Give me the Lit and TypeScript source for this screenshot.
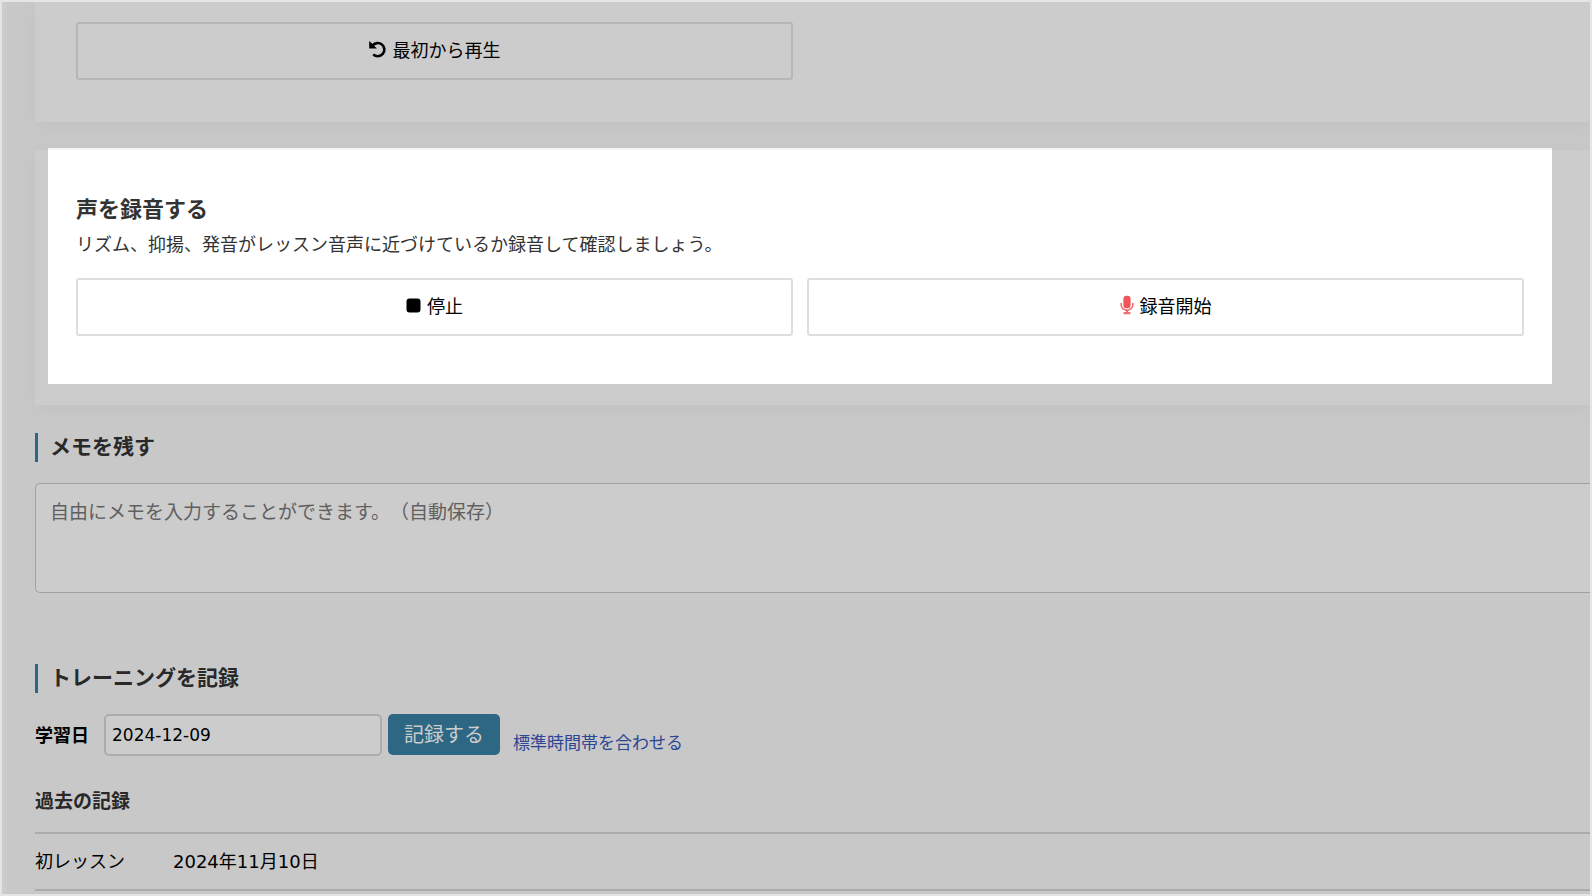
import { LitElement, html, css, svg } from "lit";
import { customElement, state } from "lit/decorators.js";

const undoIcon = svg`<svg class="icon undo" viewBox="0 0 18 18" aria-hidden="true">
  <path d="M3.4 5.8A6.6 6.6 0 1 1 4.2 14.4" fill="none" stroke="currentColor" stroke-width="2.6"/>
  <path d="M.2 1v7.6H8L5.6 6.2 4.2 4.4z" fill="currentColor"/></svg>`;
const stopIcon = svg`<svg class="icon stop" viewBox="0 0 15 15" aria-hidden="true">
  <rect x=".5" y=".5" width="14" height="14" rx="3" fill="currentColor"/></svg>`;
const micIcon = svg`<svg class="icon mic" viewBox="0 0 14 20" aria-hidden="true">
  <rect x="3.4" y=".8" width="7.2" height="12.4" rx="3.2" fill="currentColor"/>
  <path d="M1.2 8v2a5.8 5.2 0 0 0 11.6 0V8" fill="none" stroke="currentColor" stroke-width="1.6" opacity=".85"/>
  <path d="M7 15v3M3.6 18.2h6.8" fill="none" stroke="currentColor" stroke-width="2.2" opacity=".85"/></svg>`;

@customElement("app-root")
export class AppRoot extends LitElement {
  @state() private records = [{ label: "初レッスン", y: "2024", m: "11", d: "10" }];

  static styles = css`
    :host {
      display: block;
      font-family: "Noto Sans CJK JP", sans-serif;
      font-size: 18px;
      color: #000;
      text-spacing-trim: space-all;
    }
    * { box-sizing: border-box; margin: 0; }
    button, input, textarea { font-family: inherit; font-size: inherit; color: inherit; text-spacing-trim: inherit; }
    .page {
      min-height: 100vh;
      border: 2px solid #e5e5e5;
      background: #c8c8c8;
      display: flex;
      overflow: hidden;
    }
    .edge { width: 5px; background: #ccc; flex: none; }
    .content { flex: 1; min-width: 0; padding-left: 28px; }
    .card { background: #ccc; box-shadow: 0 4px 20px rgba(0, 0, 0, 0.03); }
    .player { padding: 20px 66px 42px 41px; margin-bottom: 28px; }
    .recorder { display: flex; padding: 0 38px 21px 13px; margin-bottom: 28px; }
    .spotlight {
      flex: 1;
      margin-top: -2px;
      border-top: 2px solid #f5f5f5;
      background: #fff;
      padding: 39px 28px 48px 28px;
    }
    .pair { display: grid; grid-template-columns: 1fr 1fr; gap: 14px; }
    .wide {
      height: 58px;
      border: 2px solid #b6b6b6;
      border-radius: 3px;
      background: transparent;
      display: flex;
      align-items: center;
      justify-content: center;
      gap: 6px;
      padding: 0 0 4px;
    }
    .spotlight .wide { border-color: #dedede; }
    .icon { flex: none; display: block; }
    .undo { width: 18px; height: 18px; }
    .stop { width: 15px; height: 15px; }
    .mic { width: 14px; height: 20px; color: #f05558; }
    .title { font-size: 22px; line-height: 36px; color: #333; }
    .lead { line-height: 36px; color: #333; margin-bottom: 17px; }
    .section {
      font-size: 21px;
      line-height: 25px;
      height: 29px;
      border-left: 3px solid #2d6784;
      padding-left: 12px;
      margin-bottom: 21px;
      color: #292929;
    }
    .memo {
      display: block;
      width: 100%;
      height: 110px;
      resize: none;
      border: 1px solid #a0a0a0;
      border-right: 0;
      border-radius: 5px 0 0 5px;
      background: #ccc;
      padding: 11px 14px;
      font-size: 19px;
      line-height: 32px;
      margin-bottom: 71px;
    }
    .memo::placeholder { color: #606060; opacity: 1; }
    .form { display: flex; align-items: flex-start; }
    .label { font-weight: bold; line-height: 40px; margin-right: 15px; }
    .date {
      width: 278px;
      height: 42px;
      border: 2px solid #acacac;
      border-radius: 5px;
      background: #ccc;
      padding: 0 6px;
      font-family: "DejaVu Sans", sans-serif;
      font-size: 17px;
      margin-right: 6px;
    }
    .save {
      height: 41px;
      border: 0;
      border-radius: 5px;
      background: #2d6784;
      color: #ccc;
      font-size: 20px;
      padding: 0 16px 3px;
      margin-right: 13px;
    }
    .zone { font-size: 17px; line-height: 24px; margin-top: 16px; color: #2d4694; text-decoration: none; }
    .past { font-size: 19px; line-height: 30px; margin: 29px 0 17px; color: #292929; }
    .log { width: 100%; border-collapse: collapse; }
    .log th, .log td {
      height: 57px;
      padding: 0 0 4px;
      border-top: 2px solid #ababab;
      border-bottom: 2px solid #ababab;
      text-align: left;
      font-weight: normal;
    }
    .log th { width: 138px; }
    .num { font-family: "DejaVu Sans", sans-serif; }
  `;

  render() {
    return html`
      <main class="page">
        <div class="edge"></div>
        <div class="content">
          <section class="card player">
            <div class="pair"><button class="wide" type="button">${undoIcon}最初から再生</button></div>
          </section>
          <section class="card recorder">
            <div class="spotlight">
              <h3 class="title">声を録音する</h3>
              <p class="lead">リズム、抑揚、発音がレッスン音声に近づけているか録音して確認しましょう。</p>
              <div class="pair">
                <button class="wide" type="button">${stopIcon}停止</button>
                <button class="wide" type="button">${micIcon}録音開始</button>
              </div>
            </div>
          </section>
          <h2 class="section" id="memo-title">メモを残す</h2>
          <textarea class="memo" aria-labelledby="memo-title" placeholder="自由にメモを入力することができます。（自動保存）"></textarea>
          <h2 class="section">トレーニングを記録</h2>
          <form class="form">
            <label class="label" for="date">学習日</label>
            <input class="date" id="date" type="text" value="2024-12-09" />
            <button class="save" type="button">記録する</button>
            <a class="zone" href="#">標準時間帯を合わせる</a>
          </form>
          <h3 class="past">過去の記録</h3>
          <table class="log">
            <tbody>
              ${this.records.map((r) => html`<tr>
                <th scope="row">${r.label}</th>
                <td><span class="num">${r.y}</span>年<span class="num">${r.m}</span>月<span class="num">${r.d}</span>日</td>
              </tr>`)}
            </tbody>
          </table>
        </div>
      </main>
    `;
  }
}
